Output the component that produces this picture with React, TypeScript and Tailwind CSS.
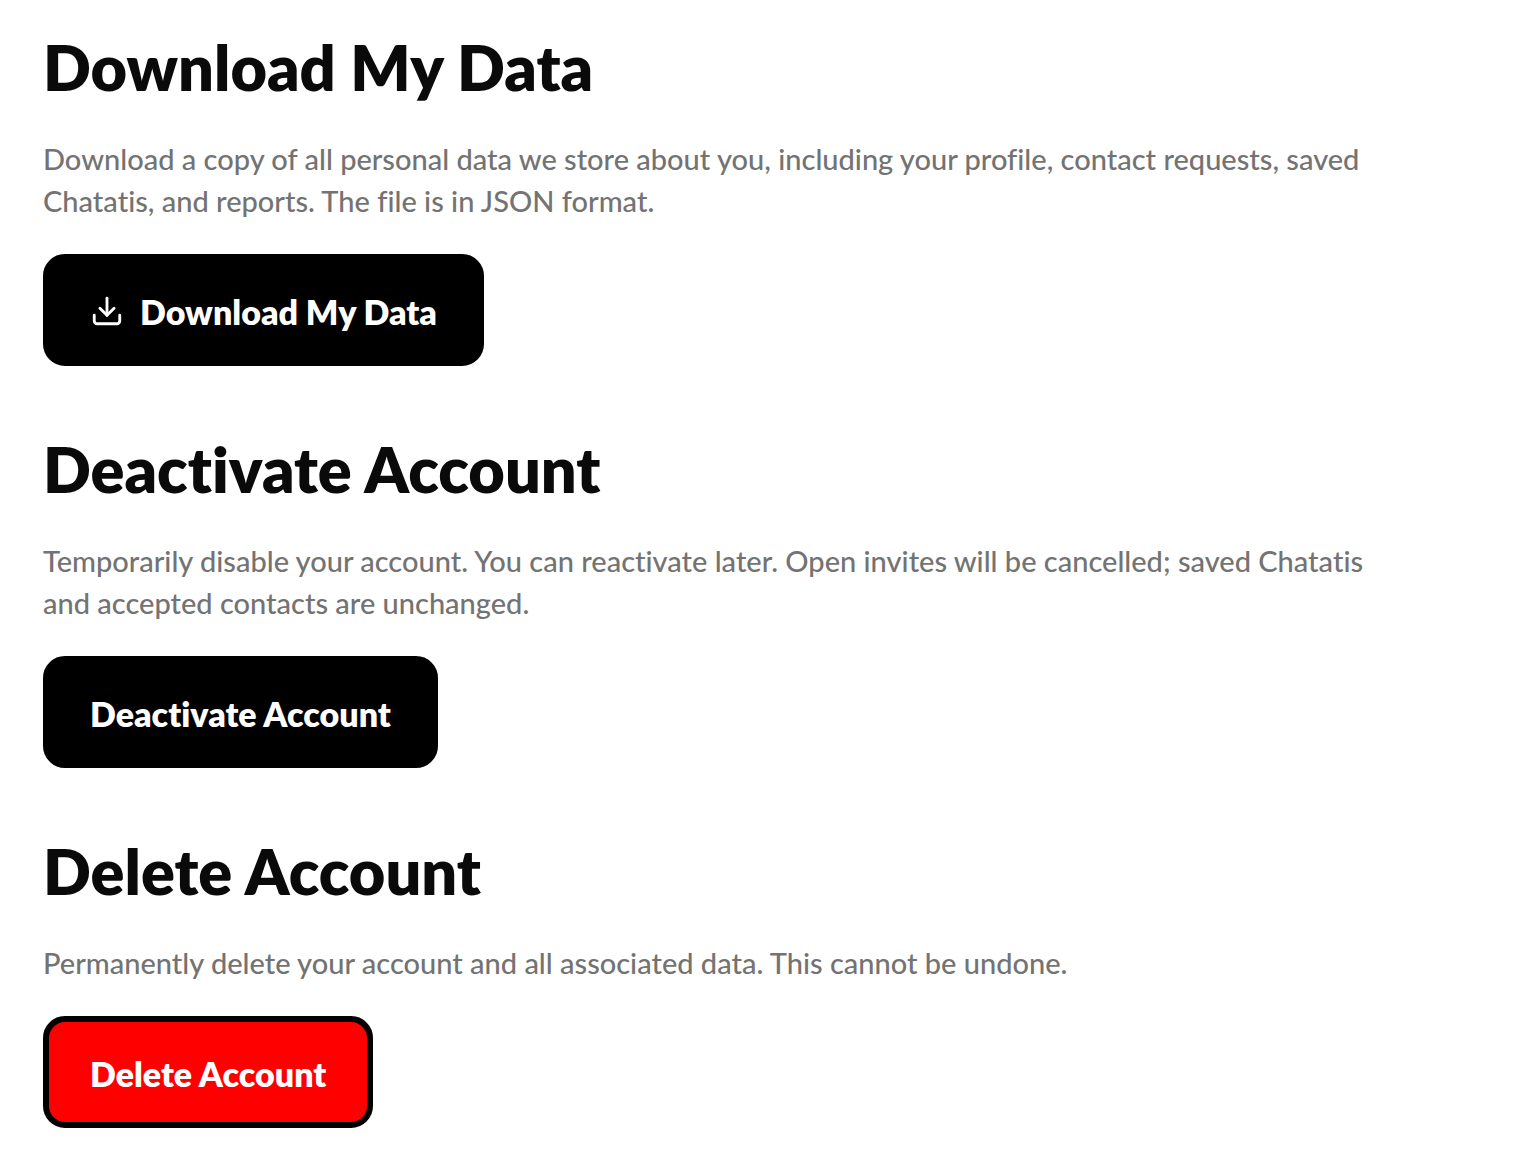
import { Download } from "lucide-react";

const sections = [
  {
    id: "download",
    title: "Download My Data",
    body: "Download a copy of all personal data we store about you, including your profile, contact requests, saved Chatatis, and reports. The file is in JSON format.",
    icon: true,
    buttonClass: "bg-black",
  },
  {
    id: "deactivate",
    title: "Deactivate Account",
    body: "Temporarily disable your account. You can reactivate later. Open invites will be cancelled; saved Chatatis and accepted contacts are unchanged.",
    icon: false,
    buttonClass: "bg-black",
  },
  {
    id: "delete",
    title: "Delete Account",
    body: "Permanently delete your account and all associated data. This cannot be undone.",
    icon: false,
    buttonClass: "bg-[#ff0000]",
  },
];

export default function App() {
  return (
    <main className="flex flex-col gap-[66px] bg-white pl-[43px] pr-[150px] pt-[30px] pb-10 font-['Lato',sans-serif] [font-variant-ligatures:none]">
      {sections.map(({ id, title, body, icon, buttonClass }) => (
        <section key={id} aria-labelledby={id} className="flex flex-col items-start">
          <h2 id={id} className="text-[63px] leading-[74px] font-extrabold text-[#0a0a0a]">
            {title}
          </h2>
          <p className="mt-[34px] text-[29px] leading-[42px] font-medium text-[#737373]">{body}</p>
          <button
            type="button"
            className={`mt-8 flex h-28 items-center gap-4 rounded-[22px] border-6 border-black px-[41px] pt-[2px] text-[34px] font-extrabold text-white ${buttonClass}`}
          >
            {icon && <Download size={34} strokeWidth={2} aria-hidden="true" />}
            {title}
          </button>
        </section>
      ))}
    </main>
  );
}
